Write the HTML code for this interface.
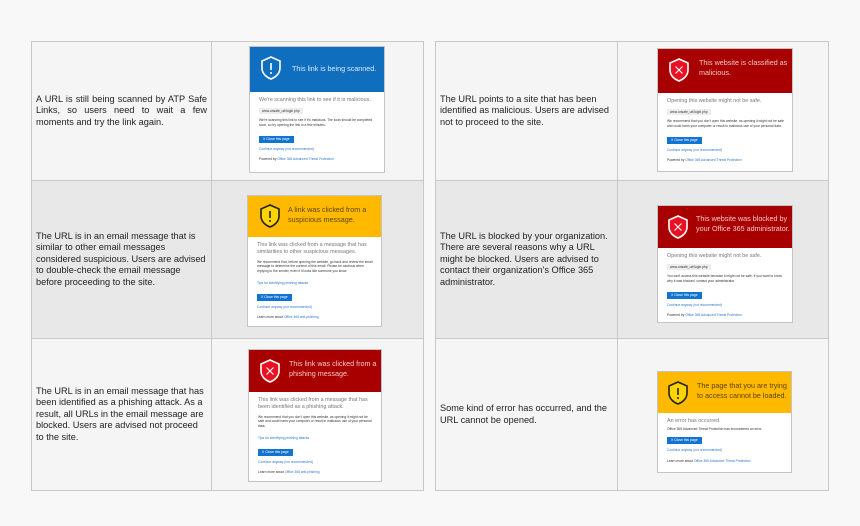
<!DOCTYPE html>
<html><head><meta charset="utf-8"><style>
*{margin:0;padding:0;box-sizing:border-box}
body{width:860px;height:526px;background:#f8f8f8;position:relative;overflow:hidden;font-family:"Liberation Sans","DejaVu Sans",sans-serif}
.cell{position:absolute;border:1px solid #c8c8c8;display:flex;align-items:center}
.t{font-size:9.2px;line-height:11.6px;color:#222;padding:0 4px;white-space:nowrap}
.card{position:absolute;background:#fff;border:1px solid #c4c4c4;overflow:hidden}
.hd{position:relative;width:100%}
.hd svg{position:absolute}
.ht{position:absolute;font-size:7.2px;line-height:10px}
.bd{padding:5px 8px 0 9px;font-size:3.3px;line-height:4.3px;color:#333}
.big{font-size:5.4px;line-height:7px;color:#777;margin-bottom:4px}
.url{display:inline-block;background:#eee;padding:1px 3px;margin-bottom:4px;font-size:3.3px}
.btn{display:inline-block;background:#1274d1;color:#fff;padding:1px 4px;font-size:3.4px;line-height:5px;margin:6px 0 4px}
.lk{color:#2a78cc}
p{margin-bottom:3px}
</style></head><body>

<!-- left table -->
<div class="cell" style="left:31px;top:41px;width:181px;height:140px;background:#f5f5f5"><div class="t" style="white-space:normal;text-align:justify">A URL is still being scanned by ATP Safe Links, so users need to wait a few moments and try the link again.</div></div>
<div class="cell" style="left:211px;top:41px;width:213px;height:140px;background:#f5f5f5"></div>
<div class="cell" style="left:31px;top:180px;width:181px;height:159px;background:#e8e8e8"><div class="t">The URL is in an email message that is<br>similar to other email messages<br>considered suspicious. Users are advised<br>to double-check the email message<br>before proceeding to the site.</div></div>
<div class="cell" style="left:211px;top:180px;width:213px;height:159px;background:#e8e8e8"></div>
<div class="cell" style="left:31px;top:338px;width:181px;height:153px;background:#f5f5f5"><div class="t">The URL is in an email message that has<br>been identified as a phishing attack. As a<br>result, all URLs in the email message are<br>blocked. Users are advised not proceed<br>to the site.</div></div>
<div class="cell" style="left:211px;top:338px;width:213px;height:153px;background:#f5f5f5"></div>

<!-- right table -->
<div class="cell" style="left:435px;top:41px;width:183px;height:140px;background:#f5f5f5"><div class="t">The URL points to a site that has been<br>identified as malicious. Users are advised<br>not to proceed to the site.</div></div>
<div class="cell" style="left:617px;top:41px;width:212px;height:140px;background:#f5f5f5"></div>
<div class="cell" style="left:435px;top:180px;width:183px;height:159px;background:#e8e8e8"><div class="t">The URL is blocked by your organization.<br>There are several reasons why a URL<br>might be blocked. Users are advised to<br>contact their organization's Office 365<br>administrator.</div></div>
<div class="cell" style="left:617px;top:180px;width:212px;height:159px;background:#e8e8e8"></div>
<div class="cell" style="left:435px;top:338px;width:183px;height:153px;background:#f5f5f5"><div class="t">Some kind of error has occurred, and the<br>URL cannot be opened.</div></div>
<div class="cell" style="left:617px;top:338px;width:212px;height:153px;background:#f5f5f5"></div>

<!-- Card 1 blue -->
<div class="card" style="left:249px;top:46px;width:136px;height:127px">
 <div class="hd" style="height:45px;background:#106ebe">
  <svg style="left:9px;top:8px" width="24" height="26" viewBox="0 0 24 26"><path d="M12 2 L21 6 V13 C21 19 16 22.5 12 24 C8 22.5 3 19 3 13 V6 Z" fill="none" stroke="#fff" stroke-width="1.6"/><path d="M12 8 V15" stroke="#fff" stroke-width="1.6"/><circle cx="12" cy="18" r="1" fill="#fff"/></svg>
  <div class="ht" style="left:42px;top:17px;color:#dbe9f7">This link is being scanned.</div>
 </div>
 <div class="bd"><div class="big">We're scanning this link to see if it is malicious.</div>
 <div class="url">www.unsafe_url/login.php</div>
 <p>We're scanning this link to see if it's malicious. The scan should be completed soon, so try opening the link in a few minutes.</p>
 <div class="btn">X Close this page</div><p class="lk">Continue anyway (not recommended)</p><p style="margin-top:6px">Powered by <span class="lk">Office 365 Advanced Threat Protection</span></p></div>
</div>

<!-- Card 2 yellow -->
<div class="card" style="left:247px;top:195px;width:135px;height:132px">
 <div class="hd" style="height:41px;background:#ffb900">
  <svg style="left:10px;top:7px" width="24" height="26" viewBox="0 0 24 26"><path d="M12 2 L21 6 V13 C21 19 16 22.5 12 24 C8 22.5 3 19 3 13 V6 Z" fill="#ffd400" stroke="#222" stroke-width="1.6"/><path d="M12 8 V15" stroke="#222" stroke-width="1.6"/><circle cx="12" cy="18" r="1" fill="#222"/></svg>
  <div class="ht" style="left:40px;top:9px;color:#5a4300">A link was clicked from a suspicious message.</div>
 </div>
 <div class="bd"><div class="big">This link was clicked from a message that has similarities to other suspicious messages.</div>
 <p>We recommend that, before opening the website, go back and review the email message to determine the content of this email. Please be cautious when replying to the sender, even if it looks like someone you know.</p>
 <p class="lk" style="margin-top:8px">Tips for identifying phishing attacks</p>
 <div class="btn">X Close this page</div><p class="lk">Continue anyway (not recommended)</p><p style="margin-top:6px">Learn more about <span class="lk">Office 365 anti-phishing</span></p></div>
</div>

<!-- Card 3 red phishing -->
<div class="card" style="left:248px;top:349px;width:134px;height:133px">
 <div class="hd" style="height:42px;background:#a80000">
  <svg style="left:9px;top:8px" width="24" height="26" viewBox="0 0 24 26"><path d="M12 2 L21 6 V13 C21 19 16 22.5 12 24 C8 22.5 3 19 3 13 V6 Z" fill="#e81123" stroke="#fff" stroke-width="1.6"/><path d="M8.5 9.5 L15.5 16.5 M15.5 9.5 L8.5 16.5" stroke="#fff" stroke-width="1.1"/></svg>
  <div class="ht" style="left:40px;top:9px;color:#f3c6c6">This link was clicked from a phishing message.</div>
 </div>
 <div class="bd"><div class="big">This link was clicked from a message that has been identified as a phishing attack.</div>
 <p>We recommend that you don't open this website, as opening it might not be safe and could harm your computer or result in malicious use of your personal data.</p>
 <p class="lk" style="margin-top:8px">Tips for identifying phishing attacks</p>
 <div class="btn">X Close this page</div><p class="lk">Continue anyway (not recommended)</p><p style="margin-top:6px">Learn more about <span class="lk">Office 365 anti-phishing</span></p></div>
</div>

<!-- Card 4 red malicious -->
<div class="card" style="left:657px;top:48px;width:136px;height:124px">
 <div class="hd" style="height:44px;background:#a80000">
  <svg style="left:9px;top:8px" width="24" height="26" viewBox="0 0 24 26"><path d="M12 2 L21 6 V13 C21 19 16 22.5 12 24 C8 22.5 3 19 3 13 V6 Z" fill="#e81123" stroke="#fff" stroke-width="1.6"/><path d="M8.5 9.5 L15.5 16.5 M15.5 9.5 L8.5 16.5" stroke="#fff" stroke-width="1.1"/></svg>
  <div class="ht" style="left:41px;top:9px;color:#f3c6c6">This website is classified as malicious.</div>
 </div>
 <div class="bd"><div class="big">Opening this website might not be safe.</div>
 <div class="url">www.unsafe_url/login.php</div>
 <p>We recommend that you don't open this website, as opening it might not be safe and could harm your computer or result in malicious use of your personal data.</p>
 <div class="btn">X Close this page</div><p class="lk">Continue anyway (not recommended)</p><p style="margin-top:6px">Powered by <span class="lk">Office 365 Advanced Threat Protection</span></p></div>
</div>

<!-- Card 5 red blocked -->
<div class="card" style="left:657px;top:205px;width:136px;height:118px">
 <div class="hd" style="height:42px;background:#a80000">
  <svg style="left:8px;top:8px" width="24" height="26" viewBox="0 0 24 26"><path d="M12 2 L21 6 V13 C21 19 16 22.5 12 24 C8 22.5 3 19 3 13 V6 Z" fill="#e81123" stroke="#fff" stroke-width="1.6"/><path d="M8.5 9.5 L15.5 16.5 M15.5 9.5 L8.5 16.5" stroke="#fff" stroke-width="1.1"/></svg>
  <div class="ht" style="left:38px;top:8px;color:#f3c6c6">This website was blocked by<br>your Office 365 administrator.</div>
 </div>
 <div class="bd"><div class="big">Opening this website might not be safe.</div>
 <div class="url">www.unsafe_url/login.php</div>
 <p>You can't access this website because it might not be safe. If you want to know why it was blocked, contact your administrator.</p>
 <div class="btn">X Close this page</div><p class="lk">Continue anyway (not recommended)</p><p style="margin-top:6px">Powered by <span class="lk">Office 365 Advanced Threat Protection</span></p></div>
</div>

<!-- Card 6 yellow error -->
<div class="card" style="left:657px;top:371px;width:135px;height:102px">
 <div class="hd" style="height:41px;background:#ffb900">
  <svg style="left:8px;top:8px" width="24" height="26" viewBox="0 0 24 26"><path d="M12 2 L21 6 V13 C21 19 16 22.5 12 24 C8 22.5 3 19 3 13 V6 Z" fill="#ffd400" stroke="#222" stroke-width="1.6"/><path d="M12 8 V15" stroke="#222" stroke-width="1.6"/><circle cx="12" cy="18" r="1" fill="#222"/></svg>
  <div class="ht" style="left:39px;top:9px;color:#5a4300">The page that you are trying to access cannot be loaded.</div>
 </div>
 <div class="bd"><div class="big" style="margin-bottom:2px">An error has occurred.</div>
 <p>Office 365 Advanced Threat Protection has encountered an error.</p>
 <div class="btn" style="margin-top:3px">X Close this page</div><p class="lk">Continue anyway (not recommended)</p><p style="margin-top:6px">Learn more about <span class="lk">Office 365 Advanced Threat Protection</span></p></div>
</div>

</body></html>
